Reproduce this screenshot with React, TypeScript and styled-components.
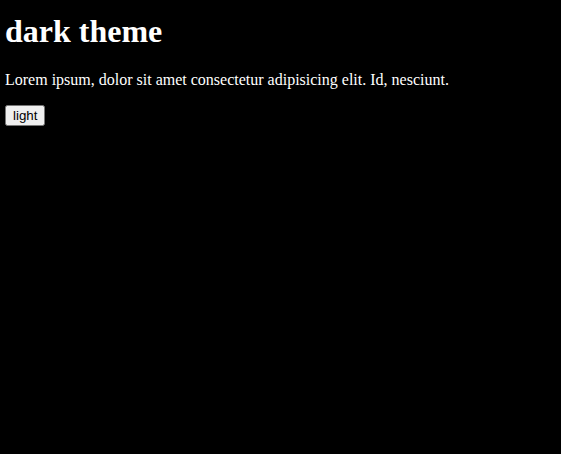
import React, { useState } from "react";
import styled, { createGlobalStyle } from "styled-components";

const Global = createGlobalStyle`
  html, body { background: #000; }
  body {
    margin: 0;
    padding: 0 5px;
    color: #fff;
    font-family: "Liberation Serif", "Times New Roman", serif;
  }
`;

const Page = styled.div`
  padding-top: 5px;
`;

const Title = styled.h1`
  font-size: 32px;
  font-weight: bold;
  margin: 8px 0 21.44px;
`;

const Text = styled.p`
  font-size: 16px;
  margin: 16px 0;
`;

const ThemeButton = styled.button`
  font-family: "Liberation Sans", Arial, sans-serif;
  font-size: 13.33px;
`;

export default function App() {
  const [dark, setDark] = useState(true);
  return (
    <>
      <Global />
      <Page>
        <Title>{dark ? "dark theme" : "light theme"}</Title>
        <Text>Lorem ipsum, dolor sit amet consectetur adipisicing elit. Id, nesciunt.</Text>
        <ThemeButton onClick={() => setDark(!dark)}>{dark ? "light" : "dark"}</ThemeButton>
      </Page>
    </>
  );
}
